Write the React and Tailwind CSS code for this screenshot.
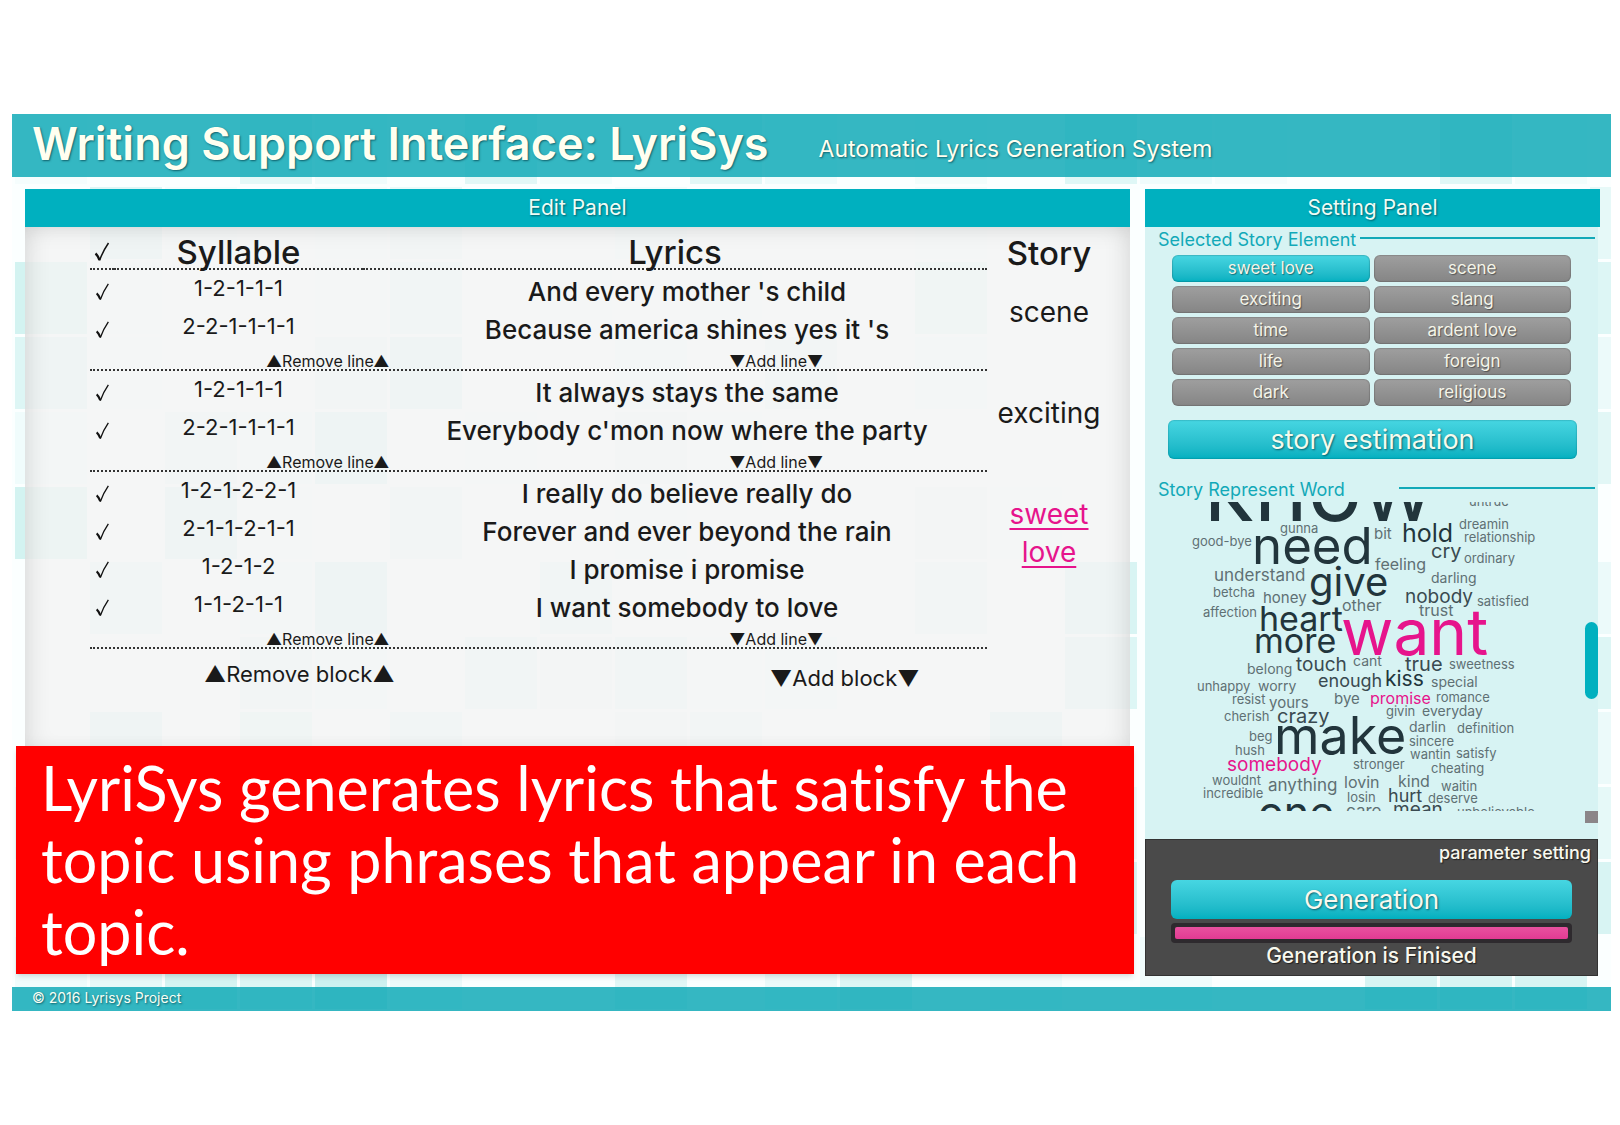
import React from "react";

const TILE = 75;

/* [row, column, opacity] of the tinted background squares */
const TILES = [
  [0, 0, 0.1], [0, 3, 0.45], [0, 4, 0.2], [0, 6, 0.5], [0, 7, 0.15], [0, 9, 0.5], [0, 10, 0.2], [0, 12, 0.15], [0, 14, 0.55], [0, 15, 0.2], [0, 16, 0.1], [0, 19, 0.55], [0, 20, 0.15],
  [1, 1, 0.6], [1, 2, 0.15], [1, 4, 0.15], [1, 5, 0.35], [1, 8, 0.2], [1, 12, 0.15], [1, 21, 0.4],
  [2, 0, 0.8], [2, 1, 0.15], [2, 4, 0.15], [2, 5, 0.45], [2, 7, 0.1], [2, 9, 0.1], [2, 12, 0.5], [2, 21, 0.6],
  [3, 0, 0.6], [3, 1, 0.1], [3, 4, 0.35], [3, 5, 0.6], [3, 8, 0.2], [3, 10, 0.35], [3, 12, 0.2], [3, 21, 0.3],
  [4, 0, 0.2], [4, 2, 0.3], [4, 3, 0.2], [4, 4, 0.7], [4, 6, 0.1], [4, 8, 0.25], [4, 9, 0.15], [4, 21, 0.5],
  [5, 0, 0.8], [5, 2, 0.65], [5, 3, 0.15], [5, 5, 0.35], [5, 8, 0.1], [5, 12, 0.25], [5, 13, 0.15],
  [6, 1, 0.4], [6, 3, 0.2], [6, 4, 0.7], [6, 7, 0.4], [6, 12, 0.3], [6, 14, 0.7], [6, 21, 0.3],
  [7, 3, 0.35], [7, 4, 0.2], [7, 6, 0.4], [7, 7, 0.25], [7, 8, 0.45], [7, 9, 0.15], [7, 10, 0.2], [7, 14, 0.6], [7, 21, 0.6],
  [8, 1, 0.6], [8, 3, 0.5], [8, 5, 0.4], [8, 8, 0.25], [8, 9, 0.35], [8, 13, 0.6], [8, 21, 0.3],
  [9, 0, 0.2], [9, 14, 0.2], [9, 21, 0.4], [10, 14, 0.6], [10, 21, 0.7],
  [11, 0, 0.2], [11, 1, 0.4], [11, 2, 0.75], [11, 3, 0.6], [11, 4, 0.9], [11, 5, 0.3], [11, 8, 0.5], [11, 10, 0.3], [11, 11, 0.6], [11, 13, 0.2], [11, 15, 0.2], [11, 18, 0.7], [11, 19, 0.7], [11, 20, 0.7],
];

const BLOCKS = [
  {
    story: "scene",
    lines: [
      ["1-2-1-1-1", "And every mother 's child"],
      ["2-2-1-1-1-1", "Because america shines yes it 's"],
    ],
  },
  {
    story: "exciting",
    lines: [
      ["1-2-1-1-1", "It always stays the same"],
      ["2-2-1-1-1-1", "Everybody c'mon now where the party"],
    ],
  },
  {
    story: "sweet love",
    active: true,
    lines: [
      ["1-2-1-2-2-1", "I really do believe really do"],
      ["2-1-1-2-1-1", "Forever and ever beyond the rain"],
      ["1-2-1-2", "I promise i promise"],
      ["1-1-2-1-1", "I want somebody to love"],
    ],
  },
];

const ELEMENTS = ["sweet love", "scene", "exciting", "slang", "time", "ardent love", "life", "foreign", "dark", "religious"];

/* [word, left, baseline, size, tone] */
const WORDS = [
  ["know", 59, 20, 91, "dark"], ["untrue", 324, 4, 13], ["gunna", 135, 31, 13], ["dreamin", 314, 27, 13],
  ["need", 107, 62, 51, "dark"], ["bit", 229, 37, 15], ["hold", 257, 41, 25, "dark"], ["relationship", 319, 40, 13],
  ["good-bye", 47, 44, 13], ["cry", 286, 56, 20, "mid"], ["ordinary", 319, 61, 13], ["feeling", 230, 68, 16],
  ["understand", 69, 80, 17], ["give", 164, 95, 40, "dark"], ["darling", 286, 81, 14], ["betcha", 68, 95, 13],
  ["honey", 118, 101, 15], ["other", 197, 109, 16], ["nobody", 260, 101, 19, "mid"], ["satisfied", 332, 104, 13],
  ["affection", 58, 115, 13], ["heart", 114, 129, 34, "dark"], ["trust", 274, 114, 16], ["more", 109, 151, 34, "dark"],
  ["want", 196, 153, 64, "pink"], ["belong", 102, 172, 14], ["touch", 151, 169, 19, "mid"], ["cant", 208, 164, 14],
  ["true", 260, 169, 20, "mid"], ["sweetness", 304, 167, 13], ["unhappy", 52, 189, 13], ["worry", 113, 189, 14],
  ["enough", 173, 186, 18, "mid"], ["kiss", 240, 184, 21, "dark"], ["special", 286, 185, 14], ["resist", 87, 202, 13],
  ["yours", 124, 206, 15], ["bye", 189, 202, 15], ["promise", 225, 202, 16, "pink"], ["romance", 291, 200, 13],
  ["cherish", 79, 219, 13], ["crazy", 132, 221, 20, "mid"], ["givin", 241, 214, 13], ["everyday", 277, 214, 14],
  ["make", 129, 253, 52, "dark"], ["darlin", 264, 230, 14], ["definition", 312, 231, 13], ["beg", 104, 239, 13],
  ["sincere", 264, 244, 13], ["hush", 90, 253, 13], ["wantin", 265, 257, 13], ["satisfy", 311, 256, 13],
  ["somebody", 82, 269, 19, "pink"], ["stronger", 208, 267, 13], ["cheating", 286, 271, 13], ["wouldnt", 67, 283, 13],
  ["anything", 123, 290, 17], ["lovin", 199, 286, 16], ["kind", 253, 285, 16], ["waitin", 296, 289, 13],
  ["incredible", 58, 296, 13], ["losin", 202, 300, 13], ["hurt", 243, 301, 18, "mid"], ["deserve", 283, 301, 13],
  ["one", 113, 326, 43, "dark"], ["care", 201, 316, 17], ["mean", 248, 314, 19, "mid"], ["unbelievable", 312, 315, 13],
];

const TONES = {
  dark: "text-[#22353c]",
  mid: "text-[#3a4a50]",
  soft: "text-[#5f7074]",
  pink: "text-[#e6148c]",
};

const SHADOW = "[text-shadow:1px_1px_2px_rgba(0,60,70,0.7)]";
const AQUA = "bg-linear-to-b from-[#46d6e2] to-[#00b0c0]";

function Tiles() {
  return (
    <svg className="absolute inset-0 h-full w-full" aria-hidden="true">
      <g fill="#c9f0ee">
        {TILES.map(([row, col, opacity]) => (
          <rect key={`${row}-${col}`} x={3 + col * TILE} y={row * TILE - 2} width="72" height="72" opacity={opacity} />
        ))}
      </g>
    </svg>
  );
}

function Tick({ label, large }) {
  return (
    <label className="relative flex justify-center">
      <input type="checkbox" defaultChecked aria-label={label} className="sr-only" />
      <svg viewBox="0 0 16 20" className={large ? "h-5 w-4" : "h-[18px] w-[15px]"} fill="none" stroke="#111" aria-hidden="true">
        <path d="M1.5 11.5 Q3.5 13 5.5 18" strokeWidth="2.4" />
        <path d="M5.5 18.5 Q9 9 14.5 1" strokeWidth="1.5" />
      </svg>
    </label>
  );
}

function EditPanel() {
  return (
    <section className="flex min-w-0 flex-1 flex-col">
      <h2 className={`bg-[#00b0bf] text-center text-[21px] leading-[38px] text-[#eefcf6] ${SHADOW}`}>Edit Panel</h2>
      <div className="flex-1 bg-[#f4f4f4]/80 pr-[19px] pb-[52px] pl-[65px] shadow-[inset_14px_0_22px_-8px_rgba(0,0,0,0.09),inset_-14px_0_22px_-8px_rgba(0,0,0,0.09),inset_0_14px_22px_-8px_rgba(0,0,0,0.06)]">
        <table className="w-full table-fixed border-separate border-spacing-0 text-center text-[26px] font-medium text-[#1a1a1a]">
          <colgroup>
            <col className="w-[24px]" />
            <col className="w-[249px]" />
            <col />
            <col className="w-[124px]" />
          </colgroup>
          <thead>
            <tr className="h-[43px] text-[33px] leading-8">
              <th className="border-b-2 border-dotted border-[#333] p-0 pt-[9px] font-medium"><Tick label="Select all lines" large /></th>
              <th className="border-b-2 border-dotted border-[#333] p-0 pt-[9px] font-medium">Syllable</th>
              <th className="border-b-2 border-dotted border-[#333] p-0 pt-[9px] font-medium">Lyrics</th>
              <th className="p-0 pt-[9px] font-medium">Story</th>
            </tr>
          </thead>
          {BLOCKS.map((block) => (
            <tbody key={block.story}>
              <tr className="h-[3px]">
                <td colSpan={3} className="p-0" />
                <td rowSpan={block.lines.length + 2} className="px-1 pt-[23px] pb-0 align-top text-[28px] leading-[38px] font-normal">
                  {block.active ? (
                    <a href="#story" className="text-[#e6148c] underline decoration-2 underline-offset-4">{block.story}</a>
                  ) : (
                    <span>{block.story}</span>
                  )}
                </td>
              </tr>
              {block.lines.map(([syllable, lyric]) => (
                <tr key={lyric} className="h-[38px]">
                  <td className="p-0"><Tick label={lyric} /></td>
                  <td className="p-0 pb-2 text-[22px] leading-[30px] font-normal">{syllable}</td>
                  <td className="p-0 pl-6 leading-[38px] whitespace-nowrap">{lyric}</td>
                </tr>
              ))}
              <tr className="h-[22px]">
                <td colSpan={3} className="border-b-2 border-dotted border-[#333] p-0">
                  <div className="flex pt-1 text-[16px] leading-4 font-normal">
                    <div className="w-[53%]"><button type="button" className="block w-full">▲Remove line▲</button></div>
                    <div className="w-[47%]"><button type="button" className="block w-full">▼Add line▼</button></div>
                  </div>
                </td>
              </tr>
            </tbody>
          ))}
        </table>
        <div className="flex pt-[9px] text-center text-[22px] leading-8 text-[#1a1a1a]">
          <div className="w-[41%]"><button type="button">▲Remove block▲</button></div>
          <div className="w-[59%] pt-1 pl-[70px]"><button type="button">▼Add block▼</button></div>
        </div>
      </div>
      <p className="mb-[2px] -mr-1 -ml-[9px] bg-[#ff0000] px-[25px] py-[6px] font-['Lato',sans-serif] text-[61px] leading-[72px] text-white shadow-md [font-variant-ligatures:none]">
        LyriSys generates lyrics that satisfy the topic using phrases that appear in each topic.
      </p>
    </section>
  );
}

function Heading({ children, className }) {
  return (
    <div className={`flex text-[18px] leading-6 text-[#12a9b8] ${className}`}>
      <h3 className="shrink-0">{children}</h3>
      <span className="mt-[9px] h-[2px] flex-1 bg-[#12a9b8]" />
    </div>
  );
}

function SettingPanel() {
  return (
    <section className="flex w-[455px] shrink-0 flex-col">
      <h2 className={`bg-[#00b0bf] text-center text-[21px] leading-[38px] text-[#eefcf6] ${SHADOW}`}>Setting Panel</h2>
      <div className="mr-[2px] flex flex-1 flex-col bg-[#d7f3f3]">
        <Heading className="gap-1 pt-px pr-[3px] pl-[13px]">Selected Story Element</Heading>
        <div className="grid grid-cols-2 gap-1 pt-[3px] pr-[27px] pl-[27px]">
          {ELEMENTS.map((name, i) => (
            <button
              key={name}
              type="button"
              aria-pressed={i === 0}
              className={`h-[27px] rounded-md text-[17px] leading-[27px] text-[#f4f4e8] shadow-[inset_0_0_1px_1px_rgba(0,0,0,0.15)] [text-shadow:1px_1px_1px_rgba(0,0,0,0.4)] ${i === 0 ? AQUA : "bg-linear-to-b from-[#9f9f9f] to-[#858585]"}`}
            >
              {name}
            </button>
          ))}
        </div>
        <div className="pt-[14px] pr-[21px] pl-[23px]">
          <button type="button" className={`h-[39px] w-full rounded-md text-[27px] leading-9 text-[#f4fbee] shadow-[inset_0_0_1px_1px_rgba(0,90,100,0.2)] ${AQUA} ${SHADOW}`}>
            story estimation
          </button>
        </div>
        <Heading className="gap-[54px] pt-[19px] pr-[3px] pl-[13px]">Story Represent Word</Heading>
        <div className="relative h-[309px] overflow-hidden">
          {WORDS.map(([word, left, baseline, size, tone]) => (
            <span
              key={word}
              className={`absolute leading-none whitespace-nowrap ${TONES[tone || "soft"]}`}
              style={{ left, top: Math.round(baseline - size * 0.864), fontSize: size }}
            >
              {word}
            </span>
          ))}
          <span className="absolute top-[120px] right-0 h-[77px] w-[13px] rounded-full bg-[#00b0bf]" />
        </div>
        <span className="h-3 w-[13px] self-end bg-[#8b8588]" />
      </div>
      <div className="mr-[2px] border border-[#333] bg-[#4a4a4a] px-[25px] pb-[6px] text-center text-[#f8f8ee]">
        <div className="-mr-[19px] text-right">
          <button type="button" className="block w-full text-right text-[18px] leading-[26px] font-medium [text-shadow:1px_1px_1px_rgba(0,0,0,0.6)]">parameter setting</button>
        </div>
        <button type="button" className={`mt-[14px] h-[39px] w-full rounded-md text-[26px] leading-9 ${AQUA} ${SHADOW}`}>Generation</button>
        <div role="progressbar" aria-label="Generation" aria-valuenow={100} className="mt-1 rounded-sm bg-[#2e2a2e] p-1">
          <div className="h-3 rounded-[2px] bg-linear-to-b from-[#e8519f] to-[#e23a93]" />
        </div>
        <p className="text-[21px] leading-[26px] font-medium [text-shadow:1px_1px_1px_rgba(0,0,0,0.6)]">Generation is Finised</p>
      </div>
    </section>
  );
}

export default function App() {
  return (
    <div className="min-h-screen bg-white pt-[114px] pr-[9px] pl-3 font-['Inter','DejaVu_Sans',sans-serif]">
      <div className="relative overflow-hidden bg-[#fbffff]">
        <Tiles />
        <div className="relative">
          <header className={`flex h-[63px] gap-[50px] bg-[#12aab7]/85 pl-5 text-[#fffff0] ${SHADOW}`}>
            <h1 className="text-[45px] leading-[60px] font-semibold">Writing Support Interface: LyriSys</h1>
            <p className="text-[23px] leading-[70px]">Automatic Lyrics Generation System</p>
          </header>
          <main className="flex gap-[15px] pt-3 pr-[11px] pb-[11px] pl-[13px]">
            <EditPanel />
            <SettingPanel />
          </main>
          <footer className={`h-6 bg-[#12aab7]/85 pl-5 text-[14px] leading-[22px] text-[#f6fff4] ${SHADOW}`}>© 2016 Lyrisys Project</footer>
        </div>
      </div>
    </div>
  );
}
